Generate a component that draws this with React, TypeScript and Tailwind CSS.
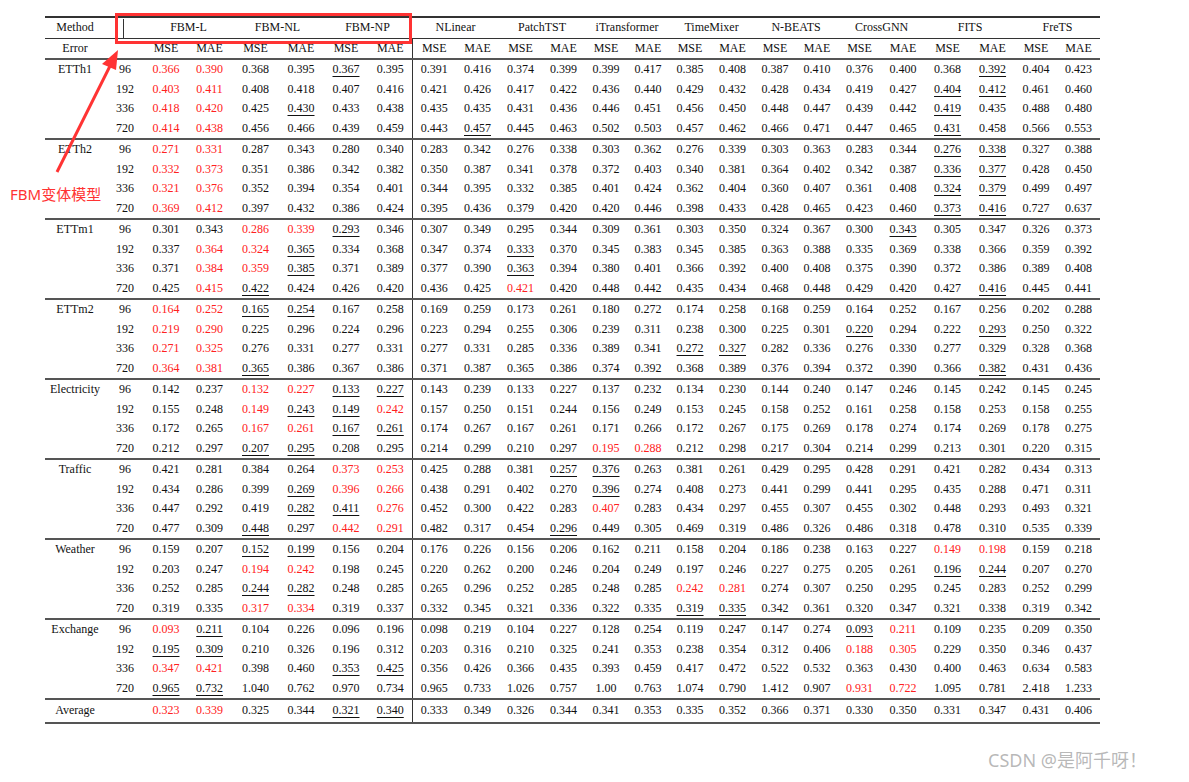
import React from "react";

const groups: [string, string[]][] = [
  ["ETTh1", [
    "0.366r 0.390r 0.368 0.395 0.367u 0.395 0.391 0.416 0.374 0.399 0.399 0.417 0.385 0.408 0.387 0.410 0.376 0.400 0.368 0.392u 0.404 0.423",
    "0.403r 0.411r 0.408 0.418 0.407 0.416 0.421 0.426 0.417 0.422 0.436 0.440 0.429 0.432 0.428 0.434 0.419 0.427 0.404u 0.412u 0.461 0.460",
    "0.418r 0.420r 0.425 0.430u 0.433 0.438 0.435 0.435 0.431 0.436 0.446 0.451 0.456 0.450 0.448 0.447 0.439 0.442 0.419u 0.435 0.488 0.480",
    "0.414r 0.438r 0.456 0.466 0.439 0.459 0.443 0.457u 0.445 0.463 0.502 0.503 0.457 0.462 0.466 0.471 0.447 0.465 0.431u 0.458 0.566 0.553",
  ]],
  ["ETTh2", [
    "0.271r 0.331r 0.287 0.343 0.280 0.340 0.283 0.342 0.276 0.338 0.303 0.362 0.276 0.339 0.303 0.363 0.283 0.344 0.276u 0.338u 0.327 0.388",
    "0.332r 0.373r 0.351 0.386 0.342 0.382 0.350 0.387 0.341 0.378 0.372 0.403 0.340 0.381 0.364 0.402 0.342 0.387 0.336u 0.377u 0.428 0.450",
    "0.321r 0.376r 0.352 0.394 0.354 0.401 0.344 0.395 0.332 0.385 0.401 0.424 0.362 0.404 0.360 0.407 0.361 0.408 0.324u 0.379u 0.499 0.497",
    "0.369r 0.412r 0.397 0.432 0.386 0.424 0.395 0.436 0.379 0.420 0.420 0.446 0.398 0.433 0.428 0.465 0.423 0.460 0.373u 0.416u 0.727 0.637",
  ]],
  ["ETTm1", [
    "0.301 0.343 0.286r 0.339r 0.293u 0.346 0.307 0.349 0.295 0.344 0.309 0.361 0.303 0.350 0.324 0.367 0.300 0.343u 0.305 0.347 0.326 0.373",
    "0.337 0.364r 0.324r 0.365u 0.334 0.368 0.347 0.374 0.333u 0.370 0.345 0.383 0.345 0.385 0.363 0.388 0.335 0.369 0.338 0.366 0.359 0.392",
    "0.371 0.384r 0.359r 0.385u 0.371 0.389 0.377 0.390 0.363u 0.394 0.380 0.401 0.366 0.392 0.400 0.408 0.375 0.390 0.372 0.386 0.389 0.408",
    "0.425 0.415r 0.422u 0.424 0.426 0.420 0.436 0.425 0.421r 0.420 0.448 0.442 0.435 0.434 0.468 0.448 0.429 0.420 0.427 0.416u 0.445 0.441",
  ]],
  ["ETTm2", [
    "0.164r 0.252r 0.165u 0.254u 0.167 0.258 0.169 0.259 0.173 0.261 0.180 0.272 0.174 0.258 0.168 0.259 0.164 0.252 0.167 0.256 0.202 0.288",
    "0.219r 0.290r 0.225 0.296 0.224 0.296 0.223 0.294 0.255 0.306 0.239 0.311 0.238 0.300 0.225 0.301 0.220u 0.294 0.222 0.293u 0.250 0.322",
    "0.271r 0.325r 0.276 0.331 0.277 0.331 0.277 0.331 0.285 0.336 0.389 0.341 0.272u 0.327u 0.282 0.336 0.276 0.330 0.277 0.329 0.328 0.368",
    "0.364r 0.381r 0.365u 0.386 0.367 0.386 0.371 0.387 0.365 0.386 0.374 0.392 0.368 0.389 0.376 0.394 0.372 0.390 0.366 0.382u 0.431 0.436",
  ]],
  ["Electricity", [
    "0.142 0.237 0.132r 0.227r 0.133u 0.227u 0.143 0.239 0.133 0.227 0.137 0.232 0.134 0.230 0.144 0.240 0.147 0.246 0.145 0.242 0.145 0.245",
    "0.155 0.248 0.149r 0.243u 0.149u 0.242r 0.157 0.250 0.151 0.244 0.156 0.249 0.153 0.245 0.158 0.252 0.161 0.258 0.158 0.253 0.158 0.255",
    "0.172 0.265 0.167r 0.261r 0.167u 0.261u 0.174 0.267 0.167 0.261 0.171 0.266 0.172 0.267 0.175 0.269 0.178 0.274 0.174 0.269 0.178 0.275",
    "0.212 0.297 0.207u 0.295u 0.208 0.295 0.214 0.299 0.210 0.297 0.195r 0.288r 0.212 0.298 0.217 0.304 0.214 0.299 0.213 0.301 0.220 0.315",
  ]],
  ["Traffic", [
    "0.421 0.281 0.384 0.264 0.373r 0.253r 0.425 0.288 0.381 0.257u 0.376u 0.263 0.381 0.261 0.429 0.295 0.428 0.291 0.421 0.282 0.434 0.313",
    "0.434 0.286 0.399 0.269u 0.396r 0.266r 0.438 0.291 0.402 0.270 0.396u 0.274 0.408 0.273 0.441 0.299 0.441 0.295 0.435 0.288 0.471 0.311",
    "0.447 0.292 0.419 0.282u 0.411u 0.276r 0.452 0.300 0.422 0.283 0.407r 0.283 0.434 0.297 0.455 0.307 0.455 0.302 0.448 0.293 0.493 0.321",
    "0.477 0.309 0.448u 0.297 0.442r 0.291r 0.482 0.317 0.454 0.296u 0.449 0.305 0.469 0.319 0.486 0.326 0.486 0.318 0.478 0.310 0.535 0.339",
  ]],
  ["Weather", [
    "0.159 0.207 0.152u 0.199u 0.156 0.204 0.176 0.226 0.156 0.206 0.162 0.211 0.158 0.204 0.186 0.238 0.163 0.227 0.149r 0.198r 0.159 0.218",
    "0.203 0.247 0.194r 0.242r 0.198 0.245 0.220 0.262 0.200 0.246 0.204 0.249 0.197 0.246 0.227 0.275 0.205 0.261 0.196u 0.244u 0.207 0.270",
    "0.252 0.285 0.244u 0.282u 0.248 0.285 0.265 0.296 0.252 0.285 0.248 0.285 0.242r 0.281r 0.274 0.307 0.250 0.295 0.245 0.283 0.252 0.299",
    "0.319 0.335 0.317r 0.334r 0.319 0.337 0.332 0.345 0.321 0.336 0.322 0.335 0.319u 0.335u 0.342 0.361 0.320 0.347 0.321 0.338 0.319 0.342",
  ]],
  ["Exchange", [
    "0.093r 0.211u 0.104 0.226 0.096 0.196 0.098 0.219 0.104 0.227 0.128 0.254 0.119 0.247 0.147 0.274 0.093u 0.211r 0.109 0.235 0.209 0.350",
    "0.195u 0.309u 0.210 0.326 0.196 0.312 0.203 0.316 0.210 0.325 0.241 0.353 0.238 0.354 0.312 0.406 0.188r 0.305r 0.229 0.350 0.346 0.437",
    "0.347r 0.421r 0.398 0.460 0.353u 0.425u 0.356 0.426 0.366 0.435 0.393 0.459 0.417 0.472 0.522 0.532 0.363 0.430 0.400 0.463 0.634 0.583",
    "0.965u 0.732u 1.040 0.762 0.970 0.734 0.965 0.733 1.026 0.757 1.00 0.763 1.074 0.790 1.412 0.907 0.931r 0.722r 1.095 0.781 2.418 1.233",
  ]],
];
const avg = "0.323r 0.339r 0.325 0.344 0.321u 0.340u 0.333 0.349 0.326 0.344 0.341 0.353 0.335 0.352 0.366 0.371 0.330 0.350 0.331 0.347 0.431 0.406";
const horizons = ["96", "192", "336", "720"];
const methods = ["NLinear", "PatchTST", "iTransformer", "TimeMixer", "N-BEATS", "CrossGNN", "FITS", "FreTS"];
const widths = [60, 40, 42, 45, 47, 44, 46, 43, 44, 43, 43, 43, 42, 42, 42, 43, 42, 42, 43, 44, 45, 45, 42, 43];

function Cell({ v, i, cls }: { v: string; i: number; cls?: string }) {
  const red = v.endsWith("r");
  const u = v.endsWith("u");
  const t = v.replace(/[ru]$/, "");
  return (
    <td className={`text-center ${i === 6 ? "border-l border-[#333]" : ""} ${cls ?? ""}`}>
      <span className={`${red ? "text-[#ff2020]" : ""} ${u ? "underline underline-offset-[3px] decoration-1" : ""}`}>{t}</span>
    </td>
  );
}

export default function App() {
  return (
    <div className="relative w-[1189px] h-[782px] bg-white text-[#111] overflow-hidden" style={{ fontFamily: '"Liberation Serif", serif' }}>
      <div className="pt-[16px] pl-[45px]">
        <table className="table-fixed border-collapse text-[12px] leading-[19.5px] [&_td]:p-0" style={{ width: 1055 }}>
          <colgroup>
            {widths.map((w, i) => <col key={i} style={{ width: w }} />)}
          </colgroup>
          <thead>
            <tr className="border-t-2 border-[#333] h-[20px]">
              <td className="text-center">Method</td>
              <td></td>
              <td colSpan={2} className="text-center">FBM-L</td>
              <td colSpan={2} className="text-center">FBM-NL</td>
              <td colSpan={2} className="text-center">FBM-NP</td>
              {methods.map(m => <td key={m} colSpan={2} className="text-center">{m}</td>)}
            </tr>
            <tr className="border-t border-[#333] h-[19px]">
              <td className="text-center">Error</td>
              <td></td>
              {Array.from({ length: 22 }).map((_, i) => (
                <td key={i} className={`text-center ${i === 6 ? "border-l border-[#333]" : ""}`}>{i % 2 === 0 ? "MSE" : "MAE"}</td>
              ))}
            </tr>
          </thead>
          <tbody>
            {groups.map(([name, rows]) =>
              rows.map((r, ri) => {
                const last = ri === 3;
                const pad = last ? "pb-[6px]" : "";
                return (
                  <tr key={name + ri} className={`align-top ${ri === 0 ? "border-t-2 border-[#555]" : ""}`}>
                    {ri === 0 && (
                      <td rowSpan={4} className="text-center align-top pt-[19.5px]">{name}</td>
                    )}
                    <td className={`text-center ${pad}`}>{horizons[ri]}</td>
                    {r.split(" ").map((v, i) => <Cell key={i} v={v} i={i} cls={pad} />)}
                  </tr>
                );
              })
            )}
            <tr className="border-t-2 border-[#555] border-b-2 h-[24px]">
              <td className="text-center">Average</td>
              <td></td>
              {avg.split(" ").map((v, i) => <Cell key={i} v={v} i={i} />)}
            </tr>
          </tbody>
        </table>
      </div>

      {/* red highlight box */}
      <div className="absolute left-[115px] top-[13px] w-[297px] h-[31px] border-[3px] border-[#f33]" />
      <div className="absolute left-[123px] top-[19px] w-px h-[19px] bg-[#333]" />

      {/* arrow */}
      <svg className="absolute left-0 top-0" width="200" height="220">
        <line x1="57" y1="172" x2="112" y2="62" stroke="#f33" strokeWidth="3" />
        <polygon points="118,50 102,64 116,70" fill="#f33" />
      </svg>
      <div className="absolute left-[10px] top-[184px] text-[15px] text-[#f33] leading-[20px]" style={{ fontFamily: '"Noto Sans", "Noto Sans CJK SC", sans-serif' }}>
        FBM变体模型
      </div>

      <div className="absolute left-[988px] top-[748px] text-[18px] text-[#999]/70 leading-[24px]" style={{ fontFamily: '"Noto Sans", "Noto Sans CJK SC", sans-serif' }}>
        CSDN @是阿千呀！
      </div>
    </div>
  );
}
